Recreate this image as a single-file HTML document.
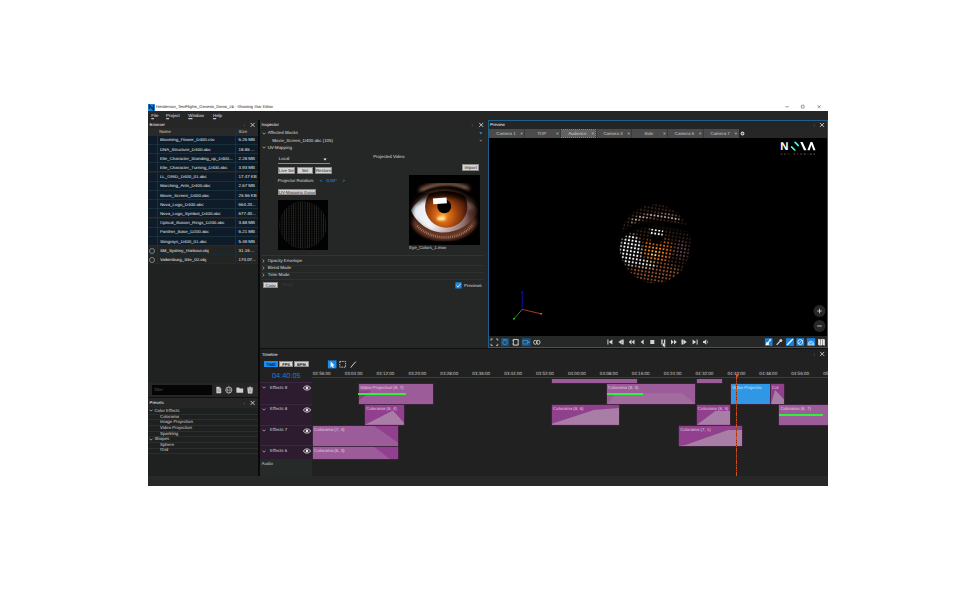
<!DOCTYPE html>
<html lang="en">
<head>
<meta charset="utf-8">
<title>Shooting Star Editor</title>
<style>
html,body{margin:0;padding:0;background:#fff;}
body{width:976px;height:591px;position:relative;overflow:hidden;font-family:"Liberation Sans",sans-serif;font-size:4.4px;color:#dedede;line-height:1;text-rendering:geometricPrecision;-webkit-font-smoothing:antialiased;}
.a{position:absolute;white-space:nowrap;}
.t{position:absolute;white-space:nowrap;transform:translateY(calc(-50% + 0.4px));}
#win{left:148px;top:111px;width:680px;height:375px;background:#262626;}
.btn{position:absolute;white-space:nowrap;overflow:hidden;background:#d6d6d6;color:#1a1a1a;text-align:center;border:0.5px solid #8a8a8a;box-sizing:border-box;line-height:6px;font-size:4.4px;}
.row{position:absolute;left:148px;width:110px;height:9.2px;}
.sel{background:#0e1b28;border-bottom:0.6px solid #18303a;box-sizing:border-box;}
svg{position:absolute;overflow:visible;}
</style>
</head>
<body>
<!-- title bar -->
<svg class="a" style="left:148px;top:104px" width="7" height="7" viewBox="0 0 7 7"><rect width="7" height="7" rx="0.8" fill="#1e7fd0"/><path d="M1.4 5.8V1.3L5.4 5.8V1.3" stroke="#0b2a6b" stroke-width="1.3" fill="none"/><path d="M0.5 4.5L2 6.5" stroke="#19b3a0" stroke-width="1"/></svg>
<div class="t" style="left:156px;top:107px;font-size:4.02px;color:#222">Henderson_TestFlights_Genesis_Demo_24 - Shooting Star Editor</div>
<svg class="a" style="left:783px;top:103px" width="40" height="8" viewBox="0 0 40 8"><g stroke="#333" stroke-width="0.5" fill="none"><path d="M2.3 3.8h3.4"/><rect x="18.3" y="2.2" width="2.8" height="2.8" rx="0.6"/><path d="M34.6 2.2l3 3M37.6 2.2l-3 3"/></g></svg>

<div id="win" class="a"></div>

<!-- menu bar -->
<div class="t" style="left:151.3px;top:116px;color:#e4e4e4"><u>F</u>ile</div>
<div class="t" style="left:166.1px;top:116px;color:#e4e4e4"><u>P</u>roject</div>
<div class="t" style="left:188.3px;top:116px;color:#e4e4e4"><u>W</u>indow</div>
<div class="t" style="left:213px;top:116px;color:#e4e4e4"><u>H</u>elp</div>

<!-- BROWSER -->
<div id="browser">
<div class="t" style="left:149.6px;top:125.3px;color:#f0f0f0;font-size:4.2px">Browser</div>
<svg style="left:242px;top:122px" width="14" height="6" viewBox="0 0 14 6"><path d="M1.2 4.6l1.6-3.2v3.2z" fill="#3c4a3c"/><path d="M8.6 0.9l4 4M12.6 0.9l-4 4" stroke="#f2f2f2" stroke-width="0.75"/></svg>
<div class="a" style="left:148px;top:128.3px;width:110px;height:255px;background:#202221"></div><div class="a" style="left:148px;top:128.3px;width:110px;height:7.4px;background:#272a28"></div>
<div class="t" style="left:159.2px;top:132.4px;color:#cfcfcf">Name</div>
<div class="t" style="left:238.6px;top:132.4px;color:#cfcfcf">Size</div>
<div class="row sel" style="top:135.7px;"></div>
<div class="t" style="left:159.9px;top:140.3px;color:#e8ebee;width:74px;overflow:hidden">Blooming_Flower_D400.csv</div>
<div class="t" style="left:238.6px;top:140.3px;color:#e8ebee">6.26 MB</div>
<div class="row sel" style="top:144.9px;"></div>
<div class="t" style="left:159.9px;top:149.5px;color:#e8ebee;width:74px;overflow:hidden">DNA_Structure_D400.abc</div>
<div class="t" style="left:238.6px;top:149.5px;color:#e8ebee">18.86 ...</div>
<div class="row sel" style="top:154.1px;"></div>
<div class="t" style="left:159.9px;top:158.7px;color:#e8ebee;width:74px;overflow:hidden">Elle_Character_Standing_up_D400...</div>
<div class="t" style="left:238.6px;top:158.7px;color:#e8ebee">2.28 MB</div>
<div class="row sel" style="top:163.3px;"></div>
<div class="t" style="left:159.9px;top:167.9px;color:#e8ebee;width:74px;overflow:hidden">Elle_Character_Turning_D400.abc</div>
<div class="t" style="left:238.6px;top:167.9px;color:#e8ebee">3.93 MB</div>
<div class="row sel" style="top:172.5px;"></div>
<div class="t" style="left:159.9px;top:177.1px;color:#e8ebee;width:74px;overflow:hidden">LL_GRID_D400_01.abc</div>
<div class="t" style="left:238.6px;top:177.1px;color:#e8ebee">17.47 KB</div>
<div class="row sel" style="top:181.7px;"></div>
<div class="t" style="left:159.9px;top:186.3px;color:#e8ebee;width:74px;overflow:hidden">Marching_Ants_D400.abc</div>
<div class="t" style="left:238.6px;top:186.3px;color:#e8ebee">2.67 MB</div>
<div class="row sel" style="top:190.9px;"></div>
<div class="t" style="left:159.9px;top:195.5px;color:#e8ebee;width:74px;overflow:hidden">Movie_Screen_D400.abc</div>
<div class="t" style="left:238.6px;top:195.5px;color:#e8ebee">25.56 KB</div>
<div class="row sel" style="top:200.1px;"></div>
<div class="t" style="left:159.9px;top:204.7px;color:#e8ebee;width:74px;overflow:hidden">Nova_Logo_D400.abc</div>
<div class="t" style="left:238.6px;top:204.7px;color:#e8ebee">664.20...</div>
<div class="row sel" style="top:209.3px;"></div>
<div class="t" style="left:159.9px;top:213.9px;color:#e8ebee;width:74px;overflow:hidden">Nova_Logo_Symbol_D400.abc</div>
<div class="t" style="left:238.6px;top:213.9px;color:#e8ebee">677.40...</div>
<div class="row sel" style="top:218.5px;"></div>
<div class="t" style="left:159.9px;top:223.1px;color:#e8ebee;width:74px;overflow:hidden">Optical_Illusion_Rings_D200.abc</div>
<div class="t" style="left:238.6px;top:223.1px;color:#e8ebee">3.88 MB</div>
<div class="row sel" style="top:227.7px;"></div>
<div class="t" style="left:159.9px;top:232.3px;color:#e8ebee;width:74px;overflow:hidden">Panther_Base_D200.abc</div>
<div class="t" style="left:238.6px;top:232.3px;color:#e8ebee">6.21 MB</div>
<div class="row sel" style="top:236.9px;"></div>
<div class="t" style="left:159.9px;top:241.5px;color:#e8ebee;width:74px;overflow:hidden">Stingrays_D400_01.abc</div>
<div class="t" style="left:238.6px;top:241.5px;color:#e8ebee">5.48 MB</div>
<div class="row" style="top:246.1px;background:#232525;border-bottom:0.6px solid #1b2b30;box-sizing:border-box;"></div>
<svg style="left:149.4px;top:247.7px" width="6" height="6" viewBox="0 0 6 6"><circle cx="3" cy="3" r="2.5" fill="none" stroke="#b8b8b8" stroke-width="0.6"/></svg>
<div class="t" style="left:159.9px;top:250.7px;color:#e8ebee;width:74px;overflow:hidden">SM_Sydney_Harbour.obj</div>
<div class="t" style="left:238.6px;top:250.7px;color:#e8ebee">31.16 ...</div>
<div class="row" style="top:255.3px;background:#232525;border-bottom:0.6px solid #1b2b30;box-sizing:border-box;"></div>
<svg style="left:149.4px;top:256.9px" width="6" height="6" viewBox="0 0 6 6"><circle cx="3" cy="3" r="2.5" fill="none" stroke="#b8b8b8" stroke-width="0.6"/></svg>
<div class="t" style="left:159.9px;top:259.9px;color:#e8ebee;width:74px;overflow:hidden">Valkenburg_Site_02.obj</div>
<div class="t" style="left:238.6px;top:259.9px;color:#e8ebee">174.07...</div>
<div class="a" style="left:157.4px;top:128.3px;width:0.7px;height:136.2px;background:#1d2f38"></div>
<div class="a" style="left:235.1px;top:128.3px;width:0.8px;height:136.2px;background:#1d2f38"></div>
<div class="a" style="left:152px;top:385.2px;width:60px;height:9.5px;background:#050505"></div>
<div class="t" style="left:154.6px;top:390px;color:#5a5a5a">filter</div>
<svg style="left:215px;top:386px" width="40" height="8" viewBox="0 0 40 8">
<path d="M1.4 0.8h3.2l1.6 1.6v4.9h-4.8z" fill="#cfcfcf"/><path d="M4.6 0.8v1.6h1.6" fill="none" stroke="#555" stroke-width="0.4"/><path d="M2.3 3.6h3M2.3 4.6h3M2.3 5.6h3" stroke="#666" stroke-width="0.35"/>
<circle cx="13.8" cy="4" r="3.1" fill="none" stroke="#cfcfcf" stroke-width="0.7"/><ellipse cx="13.8" cy="4" rx="1.3" ry="3.1" fill="none" stroke="#cfcfcf" stroke-width="0.5"/><path d="M10.7 4h6.2" stroke="#cfcfcf" stroke-width="0.5"/>
<path d="M21.4 1.5h2.6l0.8 0.9h3.4v4.4h-6.8z" fill="#cfcfcf"/>
<path d="M32.6 2.3h5l-0.5 5h-4zM32.2 1.6h5.8M34.2 1.6v-0.7h1.8v0.7" fill="#cfcfcf" stroke="#cfcfcf" stroke-width="0.5"/><path d="M34.2 3.2v3.2M35.1 3.2v3.2M36 3.2v3.2" stroke="#666" stroke-width="0.35"/>
</svg>
</div>
<!-- INSPECTOR -->
<div id="inspector">
<div class="a" style="left:257.7px;top:120px;width:2.9px;height:356px;background:#23383a"></div><div class="a" style="left:258.4px;top:120px;width:1.5px;height:356px;background:#0a0a0a"></div>
<div class="t" style="left:261.6px;top:125.3px;color:#f0f0f0;font-size:4.2px">Inspector</div>
<svg style="left:470px;top:122px" width="14" height="6" viewBox="0 0 14 6"><path d="M1.2 4.6l1.6-3.2v3.2z" fill="#3c4a3c"/><path d="M9.2 0.9l4 4M13.2 0.9l-4 4" stroke="#f2f2f2" stroke-width="0.75"/></svg>
<div class="a" style="left:260px;top:129px;width:225px;height:218.5px;background:#252726"></div>
<div class="a" style="left:484.6px;top:129px;width:0.7px;height:218.5px;background:#1b2a33"></div>
<svg style="left:262px;top:132px" width="4" height="3" viewBox="0 0 4 3"><path d="M0.5 0.6l1.5 1.6l1.5-1.6" fill="none" stroke="#d8d8d8" stroke-width="0.6"/></svg>
<div class="t" style="left:267.7px;top:133.3px">Affected Blocks</div>
<div class="t" style="left:272.2px;top:140.5px">Movie_Screen_D400.abc (105)</div>
<svg style="left:262px;top:146.2px" width="4" height="3" viewBox="0 0 4 3"><path d="M0.5 0.6l1.5 1.6l1.5-1.6" fill="none" stroke="#d8d8d8" stroke-width="0.6"/></svg>
<div class="t" style="left:267.7px;top:147.6px">UV-Mapping</div>
<svg style="left:477.5px;top:130.5px" width="6" height="12" viewBox="0 0 6 12"><path d="M1.2 1.2h3.2l-1.6 2z" fill="#2a9df4"/><path d="M2 8.8l1.6 1.6M3.6 8.8l-1.6 1.6" stroke="#cfcfcf" stroke-width="0.45"/></svg>
<div class="t" style="left:278.8px;top:159.3px">Local</div>
<svg style="left:322.6px;top:158px" width="4" height="3" viewBox="0 0 4 3"><path d="M0.3 0.4h3.4l-1.7 2.2z" fill="#f0f0f0"/></svg>
<div class="a" style="left:277.8px;top:162.9px;width:52.4px;height:0.6px;background:#8c8c8c"></div>
<div class="btn" style="left:277.8px;top:167.3px;width:17.3px;height:6.6px">Live Set</div>
<div class="btn" style="left:296.6px;top:167.3px;width:16.8px;height:6.6px">Set</div>
<div class="btn" style="left:314.9px;top:167.3px;width:17.3px;height:6.6px">Restore</div>
<div class="t" style="left:277.8px;top:181.3px">Projector Rotation:</div>
<div class="t" style="left:319.8px;top:181.3px;color:#2a9df4">&lt;</div>
<div class="t" style="left:326.6px;top:181.3px;color:#2a9df4">0,00°</div>
<div class="t" style="left:342.4px;top:181.3px;color:#2a9df4">&gt;</div>
<div class="btn" style="left:277.8px;top:188.8px;width:38.6px;height:6.6px">UV-Mapping Export</div>
<svg style="left:277.5px;top:200px" width="50" height="50" viewBox="0 0 50 50"><defs><pattern id="uvp" width="2.3" height="2.3" patternUnits="userSpaceOnUse" x="0.6" y="0.5"><rect x="0.7" y="0.2" width="0.9" height="1.8" fill="#2e2e2c"/></pattern><clipPath id="uvc"><circle cx="25" cy="25" r="23.8"/></clipPath></defs><rect width="50" height="50" fill="#020202"/><rect x="1" y="1" width="48" height="48" fill="url(#uvp)" clip-path="url(#uvc)"/></svg>
<div class="t" style="left:373.2px;top:157.1px">Projected Video:</div>
<div class="btn" style="left:462.2px;top:163.9px;width:16.9px;height:6.9px">Import</div>
<svg style="left:409px;top:174.5px;overflow:hidden" width="70.5" height="70" viewBox="0 0 70 70">
<defs>
<radialGradient id="gSkin" cx="0.5" cy="0.52" r="0.55"><stop offset="0" stop-color="#8a5640"/><stop offset="0.55" stop-color="#5a3022"/><stop offset="0.85" stop-color="#1c0d08"/><stop offset="1" stop-color="#000"/></radialGradient>
<linearGradient id="gScl" x1="0" x2="1"><stop offset="0" stop-color="#dfe6ee"/><stop offset="0.3" stop-color="#f4f6fa"/><stop offset="0.62" stop-color="#b99a98"/><stop offset="1" stop-color="#5a3430"/></linearGradient>
<radialGradient id="gIris" cx="0.42" cy="0.72" r="0.7"><stop offset="0" stop-color="#ffae3c"/><stop offset="0.18" stop-color="#e0741a"/><stop offset="0.45" stop-color="#a8480f"/><stop offset="0.75" stop-color="#5a220a"/><stop offset="1" stop-color="#1a0702"/></radialGradient>
<filter id="b1" x="-20%" y="-20%" width="140%" height="140%"><feGaussianBlur stdDeviation="1.1"/></filter>
<filter id="b2" x="-20%" y="-20%" width="140%" height="140%"><feGaussianBlur stdDeviation="2.2"/></filter>
<filter id="b0" x="-20%" y="-20%" width="140%" height="140%"><feGaussianBlur stdDeviation="0.5"/></filter>
<clipPath id="cEye"><path d="M1.5 35C10 21 24 15 38 16C54 17 64 25 69 36C62 50 48 57.5 34 57.5C20 57.5 7 48 1.5 35Z"/></clipPath>
<g id="eyeart">
<rect width="70" height="70" fill="#000"/>
<ellipse cx="35" cy="38" rx="37" ry="29" fill="url(#gSkin)"/>
<path d="M11 16.5C24 9 44 8 59 14.5" stroke="#b88464" stroke-width="5" fill="none" filter="url(#b2)" opacity="0.9"/>
<path d="M15 15C26 11 42 10.5 55 14" stroke="#d8b49c" stroke-width="1" stroke-dasharray="1.2 1.6" fill="none" filter="url(#b0)" opacity="0.55"/>
<g clip-path="url(#cEye)" filter="url(#b0)">
<rect width="70" height="70" fill="url(#gScl)"/>
<circle cx="37" cy="31.5" r="21.2" fill="url(#gIris)"/>
<circle cx="35" cy="31.4" r="6.9" fill="#040100"/>
<path d="M-2 38C8 25 24 20.5 38 21.5C54 22.5 66 28 72 38L72 8L-2 8Z" fill="#000" opacity="0.85" filter="url(#b2)"/>
<path d="M56 36C60 40 62 46 58 52L72 52L72 30Z" fill="#3a1c18" opacity="0.7" filter="url(#b2)"/>
</g>
<path d="M-2 32C8 19 24 13.5 38 14.5C54 15.5 66 23 72 33L72 27C64 17 52 10.5 38 10.5C22 10.5 6 18 -2 27Z" fill="#030101" filter="url(#b1)"/>
<path d="M3 46C12 58 24 62 36 62C48 62 60 56 67 45" stroke="#7c4630" stroke-width="6" fill="none" filter="url(#b2)" opacity="0.9"/>
<path d="M8 51C16 59 26 62.5 36 62.5C47 62.5 57 58 63 50" stroke="#d8b09a" stroke-width="2.2" stroke-dasharray="0.6 1.3" fill="none" opacity="0.7"/>
<path d="M23.6 23.6l13.6-1l0.5 5.6l-13.6 1z" fill="#fff" filter="url(#b0)"/>
<ellipse cx="32" cy="43.5" rx="4.4" ry="2.1" fill="#fff0a0" filter="url(#b1)"/>
<rect x="-2" y="-2" width="74" height="74" fill="none" stroke="#000" stroke-width="9" filter="url(#b2)"/>
</g>
</defs>
<use href="#eyeart"/>
</svg>
<div class="t" style="left:409.2px;top:248.1px">Eye_Colors_1.mov</div>
<div class="a" style="left:262px;top:255px;width:222px;height:0.5px;background:#2c3633"></div>
<svg style="left:262.4px;top:259px" width="3" height="4" viewBox="0 0 3 4"><path d="M0.6 0.5l1.6 1.5l-1.6 1.5" fill="none" stroke="#d8d8d8" stroke-width="0.6"/></svg>
<div class="t" style="left:267.7px;top:261.1px">Opacity Envelope</div>
<svg style="left:262.4px;top:266.1px" width="3" height="4" viewBox="0 0 3 4"><path d="M0.6 0.5l1.6 1.5l-1.6 1.5" fill="none" stroke="#d8d8d8" stroke-width="0.6"/></svg>
<div class="t" style="left:267.7px;top:268.20000000000005px">Blend Mode</div>
<svg style="left:262.4px;top:273.1px" width="3" height="4" viewBox="0 0 3 4"><path d="M0.6 0.5l1.6 1.5l-1.6 1.5" fill="none" stroke="#d8d8d8" stroke-width="0.6"/></svg>
<div class="t" style="left:267.7px;top:275.20000000000005px">Time Mode</div>
<div class="a" style="left:262px;top:264.6px;width:222px;height:0.4px;background:#2b3230"></div>
<div class="a" style="left:262px;top:271.6px;width:222px;height:0.4px;background:#2b3230"></div>
<div class="a" style="left:262px;top:278.6px;width:222px;height:0.4px;background:#2b3230"></div>
<div class="btn" style="left:263px;top:282.1px;width:15.3px;height:6px;line-height:5.4px">Copy</div>
<div class="t" style="left:281.6px;top:285.2px;color:#3a3f3e">Paste</div>
<svg style="left:455.4px;top:282.1px" width="7" height="7" viewBox="0 0 7 7"><rect x="0.3" y="0.3" width="6.3" height="6.2" rx="0.6" fill="#1b87e0"/><path d="M1.5 3.5l1.5 1.6l2.6-3.4" fill="none" stroke="#eaf4ff" stroke-width="0.8"/></svg>
<div class="t" style="left:464px;top:285.7px">Previews</div>
</div>
<!-- PREVIEW -->
<div id="preview">
<div class="a" style="left:488px;top:120px;width:340px;height:228px;background:#1d5f8f"></div>
<div class="a" style="left:488.8px;top:120.8px;width:338.6px;height:226.6px;background:#252525"></div>
<div class="t" style="left:490px;top:125.3px;color:#f0f0f0;font-size:4.2px">Preview</div>
<svg style="left:812px;top:122px" width="14" height="6" viewBox="0 0 14 6"><path d="M1.2 4.6l1.6-3.2v3.2z" fill="#3c4a3c"/><path d="M8 0.9l4 4M12 0.9l-4 4" stroke="#f2f2f2" stroke-width="0.75"/></svg>
<div class="a" style="left:488.8px;top:129.2px;width:338.6px;height:206.4px;background:#000"></div>
<div class="a" style="left:488.8px;top:129.2px;width:250px;height:8.5px;background:#4b4b4b"></div>
<div class="a" style="left:738.8px;top:129.2px;width:88.6px;height:8.5px;background:#262626"></div>
<div class="t" style="left:491.6px;top:133.6px;width:28.7px;text-align:center;color:#cdcdcd">Camera 1</div>
<div class="t" style="left:520.2px;top:133.7px;color:#d8d8d8;font-size:4.6px">×</div>
<div class="t" style="left:527.3px;top:133.6px;width:28.7px;text-align:center;color:#cdcdcd">TOP</div>
<div class="t" style="left:555.9px;top:133.7px;color:#d8d8d8;font-size:4.6px">×</div>
<div class="a" style="left:524.2px;top:129.2px;width:0.6px;height:8.5px;background:#3a3a3a"></div>
<div class="a" style="left:560.6px;top:129.6px;width:34.9px;height:7.7px;background:#626262;outline:0.5px dotted #8a8a8a"></div>
<div class="t" style="left:563.0px;top:133.6px;width:28.7px;text-align:center;color:#cdcdcd">Audience</div>
<div class="t" style="left:591.6px;top:133.7px;color:#d8d8d8;font-size:4.6px">×</div>
<div class="a" style="left:559.9px;top:129.2px;width:0.6px;height:8.5px;background:#3a3a3a"></div>
<div class="t" style="left:598.7px;top:133.6px;width:28.7px;text-align:center;color:#cdcdcd">Camera 4</div>
<div class="t" style="left:627.3px;top:133.7px;color:#d8d8d8;font-size:4.6px">×</div>
<div class="a" style="left:595.6px;top:129.2px;width:0.6px;height:8.5px;background:#3a3a3a"></div>
<div class="t" style="left:634.4px;top:133.6px;width:28.7px;text-align:center;color:#cdcdcd">Side</div>
<div class="t" style="left:663.0px;top:133.7px;color:#d8d8d8;font-size:4.6px">×</div>
<div class="a" style="left:631.3px;top:129.2px;width:0.6px;height:8.5px;background:#3a3a3a"></div>
<div class="t" style="left:670.1px;top:133.6px;width:28.7px;text-align:center;color:#cdcdcd">Camera 6</div>
<div class="t" style="left:698.7px;top:133.7px;color:#d8d8d8;font-size:4.6px">×</div>
<div class="a" style="left:667.0px;top:129.2px;width:0.6px;height:8.5px;background:#3a3a3a"></div>
<div class="t" style="left:705.8px;top:133.6px;width:28.7px;text-align:center;color:#cdcdcd">Camera 7</div>
<div class="t" style="left:734.4px;top:133.7px;color:#d8d8d8;font-size:4.6px">×</div>
<div class="a" style="left:702.7px;top:129.2px;width:0.6px;height:8.5px;background:#3a3a3a"></div>
<svg style="left:740.4px;top:131px" width="5" height="5" viewBox="0 0 5 5"><circle cx="2.5" cy="2.5" r="1.9" fill="#d0d0d0"/><path d="M1.4 2.5h2.2M2.5 1.4v2.2" stroke="#333" stroke-width="0.5"/></svg>
<svg style="left:779px;top:141px" width="38" height="15" viewBox="0 0 38 15">
<text x="1.3" y="9.2" font-family="Liberation Sans, sans-serif" font-weight="bold" font-size="11.4" fill="#fff" textLength="8.2" lengthAdjust="spacingAndGlyphs">N</text>
<path d="M16.1 1.4L19.3 4.6" stroke="#35dcc0" stroke-width="1.7" stroke-linecap="round"/><path d="M16.4 1.3L19 3.9" stroke="#eafffb" stroke-width="0.7" stroke-linecap="round"/><path d="M12.6 5.8L15.8 9" stroke="#35dcc0" stroke-width="1.7" stroke-linecap="round"/><path d="M12.9 6.5L15.5 9.1" stroke="#eafffb" stroke-width="0.7" stroke-linecap="round"/>
<path d="M21.2 1h2.4l3.8 8.2h-2.4z" fill="#fff"/>
<path d="M28.4 9.2l3.1-8.2h1.9l3.1 8.2h-2.2l-1.85-5.4l-1.85 5.4z" fill="#fff"/>
<text x="1.5" y="13.7" font-family="Liberation Sans, sans-serif" font-size="2.6" fill="#8a8a8a" textLength="34.6" lengthAdjust="spacing">SKY STORIES</text>
</svg>
<svg style="left:615px;top:200px" width="80" height="88" viewBox="0 0 80 88">
<defs>
<pattern id="dots" width="3.55" height="3.55" patternUnits="userSpaceOnUse" patternTransform="rotate(9) translate(0.6 0.2)"><rect width="3.55" height="3.55" fill="#000"/><circle cx="1.77" cy="1.77" r="1.05" fill="#fff"/></pattern>
<mask id="mDots"><ellipse cx="40" cy="43.7" rx="36" ry="39.5" fill="url(#dots)"/></mask>
<radialGradient id="gIris2" cx="0.4" cy="0.62" r="0.7"><stop offset="0" stop-color="#ffb648"/><stop offset="0.3" stop-color="#f08020"/><stop offset="0.65" stop-color="#c85a14"/><stop offset="0.9" stop-color="#7a3410"/><stop offset="1" stop-color="#3a1808"/></radialGradient><filter id="bd"><feGaussianBlur stdDeviation="0.35"/></filter>
</defs>
<g mask="url(#mDots)" filter="url(#bd)">
<rect width="80" height="88" fill="#3a2018"/>
<rect x="58" width="22" height="88" fill="#2a1a16" filter="url(#b2)"/>
<path d="M8 66C20 76 44 80 70 66L70 90L8 90Z" fill="#7a3f26" filter="url(#b2)"/>
<ellipse cx="40" cy="70" rx="24" ry="9" fill="#a5603c" filter="url(#b2)" opacity="0.8"/>
<path d="M16 22C28 14 50 13 64 20" stroke="#d9b9b0" stroke-width="4.2" fill="none" filter="url(#b1)"/>
<ellipse cx="16" cy="50" rx="11" ry="16" fill="#fff" filter="url(#b1)"/>
<ellipse cx="28" cy="63" rx="13" ry="4.5" fill="#f4e8e4" filter="url(#b1)" transform="rotate(12 28 63)"/>
<ellipse cx="66" cy="50" rx="7" ry="10" fill="#6a4a48" filter="url(#b2)"/>
<ellipse cx="43.6" cy="49" rx="16" ry="13.5" fill="url(#gIris2)" filter="url(#b0)"/>
<ellipse cx="39.5" cy="54.5" rx="3.6" ry="2.6" fill="#ffe890" filter="url(#b0)"/>
<path d="M6 36C18 24 40 20 76 30" stroke="#000" stroke-width="6" fill="none" filter="url(#b1)"/>
<ellipse cx="42" cy="39" rx="7" ry="5" fill="#000" filter="url(#b1)"/>
<path d="M34.6 28.6l13.6 1.8l-0.8 6l-13.6-1.8z" fill="#fff"/>
</g>
</svg>
<svg style="left:510px;top:288px" width="36" height="36" viewBox="0 0 36 36">
<path d="M12.2 21.4V4.6" stroke="#1010d8" stroke-width="0.8"/><path d="M12.2 2.8l1.2 2.4h-2.4z" fill="#1010d8"/>
<path d="M12.2 21.4L31 25.8" stroke="#d0461a" stroke-width="0.8"/><rect x="30.4" y="25" width="1.6" height="1.6" fill="#e8662a"/>
<path d="M12.2 21.4L4.2 30.6" stroke="#18c018" stroke-width="0.8"/><rect x="3.2" y="30" width="1.6" height="1.6" fill="#22e022"/>
</svg>
<svg style="left:812px;top:304px" width="15" height="30" viewBox="0 0 15 30">
<circle cx="7.5" cy="7" r="6" fill="#262827"/><path d="M5.2 7h4.6M7.5 4.7v4.6" stroke="#c8c8c8" stroke-width="0.9"/>
<circle cx="7.5" cy="22" r="6" fill="#262827"/><path d="M5.2 22h4.6" stroke="#c8c8c8" stroke-width="0.9"/>
</svg>
<div class="a" style="left:488.8px;top:335.6px;width:338.6px;height:11.8px;background:#262827"></div>
<svg style="left:488px;top:335px" width="340" height="13" viewBox="0 0 340 13">
<path d="M3 5.6V4h1.8M8 4h1.8v1.6M9.8 8.8v1.6H8M4.8 10.4H3V8.8" fill="none" stroke="#d4d4d4" stroke-width="0.8"/>
<rect x="12.9" y="3.1" width="8.2" height="8.2" fill="#184f7c"/><circle cx="17" cy="7.4" r="2.3" fill="none" stroke="#5b8fb5" stroke-width="0.7"/><path d="M14.6 4.6h4.8M17 4v1" stroke="#5b8fb5" stroke-width="0.6"/>
<rect x="25.3" y="4.6" width="4.8" height="5.4" fill="none" stroke="#d4d4d4" stroke-width="0.9"/><path d="M24.3 5.6h1M24.3 9h1M30.1 5.6h1M30.1 9h1M26.8 3.8v0.8M28.6 3.8v0.8M26.8 10v0.8M28.6 10v0.8" stroke="#d4d4d4" stroke-width="0.6"/>
<rect x="33.8" y="3.1" width="8.9" height="8.2" fill="#184f7c"/><rect x="35" y="5.4" width="4.4" height="3.6" fill="none" stroke="#5b8fb5" stroke-width="0.7"/><path d="M39.4 7.2l2-1.4v2.8z" fill="#5b8fb5"/>
<ellipse cx="47.3" cy="7.3" rx="1.7" ry="2" fill="none" stroke="#d4d4d4" stroke-width="0.9"/><ellipse cx="50.3" cy="7.3" rx="1.7" ry="2" fill="none" stroke="#d4d4d4" stroke-width="0.9"/>
<path d="M119.40 4.4h1v5.2h-1zM124.40 4.40L120.80 7L124.40 9.60ZM133.80 4.40L130.40 7L133.80 9.60ZM134.10 4.4h1.6v5.2h-1.6zM143.50 4.60L140.70 7L143.50 9.40ZM146.50 4.60L143.70 7L146.50 9.40ZM155.70 4.40L152.70 7L155.70 9.60ZM162.30 5h4v4h-4zM173.30 4.6h1.4v4.8h-1.4zM175.90 4.6h1.4v4.8h-1.4zM183.00 4.60L185.80 7L183.00 9.40ZM186.00 4.60L188.80 7L186.00 9.40ZM193.50 4.4h1.6v5.2h-1.6zM195.40 4.40L198.80 7L195.40 9.60ZM204.60 4.40L208.20 7L204.60 9.60ZM208.60 4.4h1v5.2h-1zM215.00 6h1.4l1.8-1.8v5.6l-1.8-1.8h-1.4z" fill="#d4d4d4"/>
<path d="M219.00 5.4a2.2 2.2 0 0 1 0 3.2" fill="none" stroke="#d4d4d4" stroke-width="0.6"/>
<path d="M174.70 7.4v4.6l1.1-1l0.9 1.8l0.8-0.4l-0.9-1.7h1.5z" fill="#fff" stroke="#222" stroke-width="0.3"/>
<rect x="276.9" y="3.2" width="7.6" height="7.7" fill="#1683e0"/>
<path d="M278 10l5-6" stroke="#fff" stroke-width="1.1"/><rect x="278.2" y="7.4" width="2.6" height="2.6" fill="#fff"/><rect x="281.0" y="4.2" width="2" height="2" fill="#bfe0ff"/>
<path d="M288.6 9.9l3.2-3.4" stroke="#d4d4d4" stroke-width="1.2"/><circle cx="292.8" cy="5.4" r="1.5" fill="#d4d4d4"/>
<rect x="297.9" y="3.2" width="8.0" height="7.7" fill="#1683e0"/>
<path d="M299 10l6-6" stroke="#fff" stroke-width="1.3"/>
<rect x="308.4" y="3.2" width="7.8" height="7.7" fill="#1683e0"/>
<circle cx="312.3" cy="7" r="2.5" fill="none" stroke="#e8f3ff" stroke-width="0.8"/><path d="M310.4 9l3.8-4" stroke="#e8f3ff" stroke-width="0.8"/>
<rect x="318.8" y="3.2" width="8.4" height="7.7" fill="#1683e0"/>
<path d="M320 9.6a3 3.4 0 0 1 6 0M321.4 9.6a1.6 2 0 0 1 3.2 0M320 9.8h6" fill="none" stroke="#e8f3ff" stroke-width="0.7"/>
<path d="M330.2 3.8l2.2 0.8l2.2-0.8l2.2 0.8v6.2l-2.2-0.8l-2.2 0.8l-2.2-0.8z" fill="#f0f0f0"/><path d="M332.4 4.6v6.2M334.6 3.8v6.2" stroke="#333" stroke-width="0.5"/>
</svg>
</div>
<!-- TIMELINE -->
<div id="timeline">
<div class="a" style="left:260px;top:348px;width:568px;height:1.2px;background:#101010"></div>
<div class="a" style="left:260px;top:349.2px;width:568px;height:127px;background:#212121"></div>
<div class="t" style="left:261.9px;top:354.8px;color:#f0f0f0;font-size:4.2px">Timeline</div>
<svg style="left:812px;top:351px" width="14" height="6" viewBox="0 0 14 6"><path d="M1.2 4.6l1.6-3.2v3.2z" fill="#3c4a3c"/><path d="M8.2 0.9l4 4M12.2 0.9l-4 4" stroke="#f2f2f2" stroke-width="0.75"/></svg>
<div class="btn" style="left:264px;top:361px;width:14.4px;height:6.4px;background:#1a8cf0;color:#06233f;border-color:#1a8cf0;line-height:5.6px;font-size:4px;font-weight:bold">TIME</div>
<div class="btn" style="left:279.4px;top:361px;width:13.5px;height:6.4px;line-height:5.6px;font-size:4px;font-weight:bold">FPS</div>
<div class="btn" style="left:294.1px;top:361px;width:14.5px;height:6.4px;line-height:5.6px;font-size:4px;font-weight:bold">BPM</div>
<svg style="left:327px;top:359px" width="32" height="11" viewBox="0 0 32 11">
<rect x="0.9" y="1.4" width="8.6" height="8" fill="#1a8cf0"/><path d="M3.6 2.6v5.6l1.3-1.2l1 2l0.9-0.45l-1-1.95h1.8z" fill="#fff"/>
<rect x="12.8" y="2.4" width="5.8" height="5.8" fill="none" stroke="#e6e6e6" stroke-width="0.8" stroke-dasharray="1.5 0.9"/>
<path d="M23.6 8.6l5.2-6" stroke="#e6e6e6" stroke-width="0.9"/>
</svg>
<div class="t" style="left:272px;top:375.2px;font-size:7.35px;color:#1c7fd0">04:40:05</div>
<div class="a" style="left:312px;top:369px;width:516px;height:12px;overflow:hidden">
<div class="t" style="left:-0.3px;top:5.2px;width:20px;text-align:center;color:#c4c4c4;font-size:4.6px">02:56:00</div>
<div class="t" style="left:31.6px;top:5.2px;width:20px;text-align:center;color:#c4c4c4;font-size:4.6px">03:04:00</div>
<div class="t" style="left:63.5px;top:5.2px;width:20px;text-align:center;color:#c4c4c4;font-size:4.6px">03:12:00</div>
<div class="t" style="left:95.4px;top:5.2px;width:20px;text-align:center;color:#c4c4c4;font-size:4.6px">03:20:00</div>
<div class="t" style="left:127.3px;top:5.2px;width:20px;text-align:center;color:#c4c4c4;font-size:4.6px">03:28:00</div>
<div class="t" style="left:159.2px;top:5.2px;width:20px;text-align:center;color:#c4c4c4;font-size:4.6px">03:36:00</div>
<div class="t" style="left:191.1px;top:5.2px;width:20px;text-align:center;color:#c4c4c4;font-size:4.6px">03:44:00</div>
<div class="t" style="left:223.0px;top:5.2px;width:20px;text-align:center;color:#c4c4c4;font-size:4.6px">03:52:00</div>
<div class="t" style="left:254.9px;top:5.2px;width:20px;text-align:center;color:#c4c4c4;font-size:4.6px">04:00:00</div>
<div class="t" style="left:286.8px;top:5.2px;width:20px;text-align:center;color:#c4c4c4;font-size:4.6px">04:08:00</div>
<div class="t" style="left:318.7px;top:5.2px;width:20px;text-align:center;color:#c4c4c4;font-size:4.6px">04:16:00</div>
<div class="t" style="left:350.6px;top:5.2px;width:20px;text-align:center;color:#c4c4c4;font-size:4.6px">04:24:00</div>
<div class="t" style="left:382.5px;top:5.2px;width:20px;text-align:center;color:#c4c4c4;font-size:4.6px">04:32:00</div>
<div class="t" style="left:414.4px;top:5.2px;width:20px;text-align:center;color:#c4c4c4;font-size:4.6px">04:40:00</div>
<div class="t" style="left:446.3px;top:5.2px;width:20px;text-align:center;color:#c4c4c4;font-size:4.6px">04:48:00</div>
<div class="t" style="left:478.2px;top:5.2px;width:20px;text-align:center;color:#c4c4c4;font-size:4.6px">04:56:00</div>
<div class="t" style="left:510.1px;top:5.2px;width:20px;text-align:center;color:#c4c4c4;font-size:4.6px">05:04:00</div>
<div class="a" style="left:0;top:8.4px;width:516px;height:0.7px;background:#3c3c3c"></div>
</div>
<div class="a" style="left:260px;top:382.1px;width:52px;height:21.4px;background:#2d1b2f;border-top:0.6px solid #3d2440;box-sizing:border-box"></div>
<svg style="left:262.2px;top:386.4px" width="4" height="3" viewBox="0 0 4 3"><path d="M0.5 0.6l1.5 1.6l1.5-1.6" fill="none" stroke="#d8d8d8" stroke-width="0.6"/></svg>
<div class="t" style="left:270.1px;top:387.8px;color:#dcdcdc">Effects 9</div>
<svg style="left:303px;top:385.1px" width="8" height="6" viewBox="0 0 8 6"><path d="M0.4 3C1.8 0.2 6.2 0.2 7.6 3C6.2 5.8 1.8 5.8 0.4 3Z" fill="none" stroke="#ececec" stroke-width="0.8"/><circle cx="4" cy="3" r="1.35" fill="#ececec"/></svg>
<div class="a" style="left:260px;top:403.5px;width:52px;height:21.1px;background:#2d1b2f;border-top:0.6px solid #3d2440;box-sizing:border-box"></div>
<svg style="left:262.2px;top:407.8px" width="4" height="3" viewBox="0 0 4 3"><path d="M0.5 0.6l1.5 1.6l1.5-1.6" fill="none" stroke="#d8d8d8" stroke-width="0.6"/></svg>
<div class="t" style="left:270.1px;top:409.2px;color:#dcdcdc">Effects 8</div>
<svg style="left:303px;top:406.5px" width="8" height="6" viewBox="0 0 8 6"><path d="M0.4 3C1.8 0.2 6.2 0.2 7.6 3C6.2 5.8 1.8 5.8 0.4 3Z" fill="none" stroke="#ececec" stroke-width="0.8"/><circle cx="4" cy="3" r="1.35" fill="#ececec"/></svg>
<div class="a" style="left:260px;top:424.6px;width:52px;height:20.8px;background:#2d1b2f;border-top:0.6px solid #3d2440;box-sizing:border-box"></div>
<svg style="left:262.2px;top:428.9px" width="4" height="3" viewBox="0 0 4 3"><path d="M0.5 0.6l1.5 1.6l1.5-1.6" fill="none" stroke="#d8d8d8" stroke-width="0.6"/></svg>
<div class="t" style="left:270.1px;top:430.3px;color:#dcdcdc">Effects 7</div>
<svg style="left:303px;top:427.6px" width="8" height="6" viewBox="0 0 8 6"><path d="M0.4 3C1.8 0.2 6.2 0.2 7.6 3C6.2 5.8 1.8 5.8 0.4 3Z" fill="none" stroke="#ececec" stroke-width="0.8"/><circle cx="4" cy="3" r="1.35" fill="#ececec"/></svg>
<div class="a" style="left:260px;top:445.4px;width:52px;height:13.4px;background:#2d1b2f;border-top:0.6px solid #3d2440;box-sizing:border-box"></div>
<svg style="left:262.2px;top:449.7px" width="4" height="3" viewBox="0 0 4 3"><path d="M0.5 0.6l1.5 1.6l1.5-1.6" fill="none" stroke="#d8d8d8" stroke-width="0.6"/></svg>
<div class="t" style="left:270.1px;top:451.1px;color:#dcdcdc">Effects 6</div>
<svg style="left:303px;top:448.4px" width="8" height="6" viewBox="0 0 8 6"><path d="M0.4 3C1.8 0.2 6.2 0.2 7.6 3C6.2 5.8 1.8 5.8 0.4 3Z" fill="none" stroke="#ececec" stroke-width="0.8"/><circle cx="4" cy="3" r="1.35" fill="#ececec"/></svg>
<div class="a" style="left:260px;top:458.8px;width:52px;height:17.4px;background:#262a28"></div>
<div class="t" style="left:261.6px;top:463.9px;color:#cfcfcf">Audio</div>
<div class="a" style="left:312px;top:379px;width:516px;height:97.2px;overflow:hidden" id="clips">
<div class="a" style="left:239.9px;top:0.2px;width:84.7px;height:3.5px;background:#9c5c99;overflow:hidden;box-shadow:0 0 0 0.4px #5e2a5c">
</div>
<div class="a" style="left:384.6px;top:0.2px;width:25.2px;height:3.5px;background:#9c5c99;overflow:hidden;box-shadow:0 0 0 0.4px #5e2a5c">
</div>
<div class="a" style="left:47.0px;top:4.7px;width:73.5px;height:20.3px;background:#9c5c99;overflow:hidden;box-shadow:0 0 0 0.4px #5e2a5c">
<svg style="left:0;top:0;width:100%;height:100%" viewBox="0 0 73.5 19.7" preserveAspectRatio="none"><polygon points="0.0,6.3 12.3,6.3 0.0,16.0" fill="#91408d"/></svg>
<div class="t" style="left:1.2px;top:4.2px;color:#e2cfe2">Video Projection (9, 7)</div>
</div>
<div class="a" style="left:46.4px;top:13.8px;width:47.5px;height:2.2px;background:#2ff03a"></div>
<div class="a" style="left:294.8px;top:4.7px;width:88.6px;height:20.3px;background:#9c5c99;overflow:hidden;box-shadow:0 0 0 0.4px #5e2a5c">
<svg style="left:0;top:0;width:100%;height:100%" viewBox="0 0 88.6 19.7" preserveAspectRatio="none"><polygon points="0.0,19.7 8.9,8.9 75.3,8.9 88.6,19.7" fill="#a36c9f"/></svg>
<div class="t" style="left:1.2px;top:4.2px;color:#e2cfe2">Colorama (9, 3)</div>
</div>
<div class="a" style="left:294.8px;top:13.8px;width:36.3px;height:2.2px;background:#2ff03a"></div>
<div class="a" style="left:418.7px;top:4.7px;width:39.5px;height:20.3px;background:#2f97e6;overflow:hidden;box-shadow:0 0 0 0.4px #5e2a5c">
<div class="t" style="left:1.2px;top:4.2px;color:#cfe6fb">Video Projectio</div>
</div>
<div class="a" style="left:458.8px;top:4.7px;width:13.7px;height:20.3px;background:#91408d;overflow:hidden;box-shadow:0 0 0 0.4px #5e2a5c">
<svg style="left:0;top:0;width:100%;height:100%" viewBox="0 0 13.7 19.7" preserveAspectRatio="none"><polygon points="0.0,19.7 4.1,5.9 13.7,15.8 13.7,19.7" fill="#a97ea6"/></svg>
<div class="t" style="left:1.2px;top:4.2px;color:#e2cfe2">Col</div>
</div>
<div class="a" style="left:53.1px;top:25.9px;width:38.9px;height:19.8px;background:#91408d;overflow:hidden;box-shadow:0 0 0 0.4px #5e2a5c">
<svg style="left:0;top:0;width:100%;height:100%" viewBox="0 0 38.9 19.1" preserveAspectRatio="none"><polygon points="0.0,19.1 28.0,5.3 38.9,17.2 38.9,19.1" fill="#a97ea6"/></svg>
<div class="t" style="left:1.2px;top:4.2px;color:#e2cfe2">Colorama (8, 4)</div>
</div>
<div class="a" style="left:239.9px;top:25.9px;width:67.4px;height:19.8px;background:#91408d;overflow:hidden;box-shadow:0 0 0 0.4px #5e2a5c">
<svg style="left:0;top:0;width:100%;height:100%" viewBox="0 0 67.4 19.1" preserveAspectRatio="none"><polygon points="0.0,19.1 0.0,18.1 41.8,4.8 67.4,2.9 67.4,19.1" fill="#a97ea6"/></svg>
<div class="t" style="left:1.2px;top:4.2px;color:#e2cfe2">Colorama (8, 6)</div>
</div>
<div class="a" style="left:384.6px;top:25.9px;width:33.5px;height:19.8px;background:#91408d;overflow:hidden;box-shadow:0 0 0 0.4px #5e2a5c">
<svg style="left:0;top:0;width:100%;height:100%" viewBox="0 0 33.5 19.1" preserveAspectRatio="none"><polygon points="0.0,19.1 18.4,5.7 33.5,5.7 33.5,19.1" fill="#a97ea6"/></svg>
<div class="t" style="left:1.2px;top:4.2px;color:#e2cfe2">Colorama (8, 5)</div>
</div>
<div class="a" style="left:467.2px;top:25.9px;width:52.8px;height:19.8px;background:#9c5c99;overflow:hidden;box-shadow:0 0 0 0.4px #5e2a5c">
<div class="t" style="left:1.2px;top:4.2px;color:#e2cfe2">Colorama (8, 7)</div>
</div>
<div class="a" style="left:467.2px;top:34.7px;width:43.6px;height:2.2px;background:#2ff03a"></div>
<div class="a" style="left:0.9px;top:46.8px;width:85.3px;height:20.0px;background:#9c5c99;overflow:hidden;box-shadow:0 0 0 0.4px #5e2a5c">
<svg style="left:0;top:0;width:100%;height:100%" viewBox="0 0 85.3 19.3" preserveAspectRatio="none"><polygon points="61.4,0.0 85.3,0.0 85.3,16.4" fill="#91408d"/></svg>
<div class="t" style="left:1.2px;top:4.2px;color:#e2cfe2">Colorama (7, 4)</div>
</div>
<div class="a" style="left:367.0px;top:46.8px;width:63.0px;height:20.0px;background:#91408d;overflow:hidden;box-shadow:0 0 0 0.4px #5e2a5c">
<svg style="left:0;top:0;width:100%;height:100%" viewBox="0 0 63.0 19.3" preserveAspectRatio="none"><polygon points="0.0,19.3 6.3,18.3 49.1,3.9 63.0,3.9 63.0,19.3" fill="#a97ea6"/></svg>
<div class="t" style="left:1.2px;top:4.2px;color:#e2cfe2">Colorama (7, 1)</div>
</div>
<div class="a" style="left:0.9px;top:67.9px;width:85.3px;height:11.9px;background:#9c5c99;overflow:hidden;box-shadow:0 0 0 0.4px #5e2a5c">
<svg style="left:0;top:0;width:100%;height:100%" viewBox="0 0 85.3 11.9" preserveAspectRatio="none"><polygon points="61.4,0.0 85.3,0.0 85.3,11.9 76.8,11.9" fill="#91408d"/></svg>
<div class="t" style="left:1.2px;top:4.2px;color:#e2cfe2">Colorama (6, 3)</div>
</div>
</div>
<div class="a" style="left:736.4px;top:376px;width:0.8px;height:100px;background:repeating-linear-gradient(180deg,#cf4f1c 0 1.6px,#7a2c10 1.6px 2.4px)"></div>
<svg style="left:734.6px;top:373.6px" width="4.4" height="4" viewBox="0 0 4.4 4"><path d="M0.2 0.3h4l-2 3.2z" fill="#e2571e"/></svg>
<div class="a" style="left:148px;top:476.2px;width:680px;height:9.8px;background:#272928"></div>
</div>
<!-- PRESETS -->
<div id="presets">
<div class="a" style="left:148px;top:396.6px;width:110.2px;height:1.2px;background:#111"></div>
<div class="t" style="left:149.6px;top:403.3px;color:#f0f0f0;font-size:4.2px">Presets</div>
<svg style="left:242.4px;top:400.2px" width="14" height="6" viewBox="0 0 14 6"><path d="M1.2 4.6l1.6-3.2v3.2z" fill="#3c4a3c"/><path d="M8.6 0.9l4 4M12.6 0.9l-4 4" stroke="#f2f2f2" stroke-width="0.75"/></svg>
<div class="a" style="left:148px;top:407.6px;width:109.6px;height:68.4px;background:#1f2020"></div>
<svg style="left:149.2px;top:409.4px" width="4" height="3" viewBox="0 0 4 3"><path d="M0.5 0.6l1.5 1.6l1.5-1.6" fill="none" stroke="#d8d8d8" stroke-width="0.6"/></svg>
<div class="t" style="left:154.4px;top:410.9px;color:#d6d6d6">Color Effects</div>
<div class="a" style="left:148px;top:413.6px;width:109.6px;height:0.4px;background:#2a2f2d"></div>
<div class="t" style="left:160px;top:416.6px;color:#d6d6d6">Colorama</div>
<div class="a" style="left:148px;top:419.3px;width:109.6px;height:0.4px;background:#2a2f2d"></div>
<div class="t" style="left:160px;top:422.3px;color:#d6d6d6">Image Projection</div>
<div class="a" style="left:148px;top:425.0px;width:109.6px;height:0.4px;background:#2a2f2d"></div>
<div class="t" style="left:160px;top:427.9px;color:#d6d6d6">Video Projection</div>
<div class="a" style="left:148px;top:430.6px;width:109.6px;height:0.4px;background:#2a2f2d"></div>
<div class="t" style="left:160px;top:433.5px;color:#d6d6d6">Sparkling</div>
<div class="a" style="left:148px;top:436.2px;width:109.6px;height:0.4px;background:#2a2f2d"></div>
<svg style="left:149.2px;top:437.7px" width="4" height="3" viewBox="0 0 4 3"><path d="M0.5 0.6l1.5 1.6l1.5-1.6" fill="none" stroke="#d8d8d8" stroke-width="0.6"/></svg>
<div class="t" style="left:154.4px;top:439.2px;color:#d6d6d6">Shapes</div>
<div class="a" style="left:148px;top:441.9px;width:109.6px;height:0.4px;background:#2a2f2d"></div>
<div class="t" style="left:160px;top:444.9px;color:#d6d6d6">Sphere</div>
<div class="a" style="left:148px;top:447.6px;width:109.6px;height:0.4px;background:#2a2f2d"></div>
<div class="t" style="left:160px;top:450.4px;color:#d6d6d6">Grid</div>
<div class="a" style="left:148px;top:453.1px;width:109.6px;height:0.4px;background:#2a2f2d"></div>
</div>
</body>
</html>
